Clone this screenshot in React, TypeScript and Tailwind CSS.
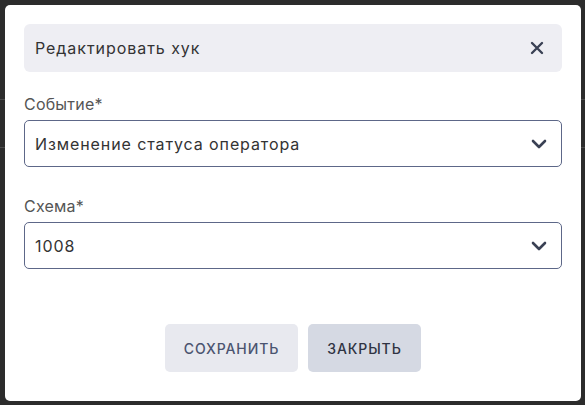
import React from "react";

const font = { fontFamily: "Inter, 'Noto Sans', sans-serif" };

function Chevron() {
  return (
    <svg width="16" height="10" viewBox="0 0 16 10" fill="none">
      <path d="M2 2 L8 8 L14 2" stroke="#3a4154" strokeWidth="2.6" strokeLinecap="round" strokeLinejoin="round" />
    </svg>
  );
}

function Select({ value }: { value: string }) {
  return (
    <div className="h-[47px] w-full rounded-[5px] border border-[#5d6788] flex items-center justify-between pl-[10px] pr-[14px]">
      <span className="text-[16px] text-[#333333] tracking-[0.9px]">{value}</span>
      <Chevron />
    </div>
  );
}

export default function App() {
  return (
    <div className="relative w-[585px] h-[405px] bg-[#2c2c2c] overflow-hidden p-[5px]" style={font}>
      <div className="absolute left-0 right-0 top-[99px] h-px bg-[#4a4a4a]" />
      <div className="absolute left-0 right-0 top-[147px] h-px bg-[#4a4a4a]" />
      <div className="relative w-[576px] h-[396px] bg-white rounded-[5px] px-[19px] pt-[19px] pb-[29px] flex flex-col">
        <div className="h-[48px] rounded-[6px] bg-[#eeeef3] flex items-center justify-between pl-[11px] pr-[18px]">
          <span className="text-[16px] text-[#333333] tracking-[0.95px]">Редактировать хук</span>
          <svg width="14" height="14" viewBox="0 0 14 14" fill="none">
            <path d="M2 2 L12 12 M12 2 L2 12" stroke="#3a4154" strokeWidth="2.4" strokeLinecap="round" />
          </svg>
        </div>
        <div className="mt-[20px] mb-[4px] h-[24px] leading-[24px] text-[16px] text-[#555555] tracking-[0.2px]">Событие*</div>
        <Select value="Изменение статуса оператора" />
        <div className="mt-[27px] mb-[4px] h-[24px] leading-[24px] text-[16px] text-[#555555] tracking-[0.2px]">Схема*</div>
        <Select value="1008" />
        <div className="mt-auto flex justify-center gap-[10px]">
          <button className="w-[133px] h-[48px] rounded-[5px] bg-[#e8e9ef] text-[14px] font-medium uppercase text-[#4b5470] tracking-[0.9px]">
            Сохранить
          </button>
          <button className="w-[113px] h-[48px] rounded-[5px] bg-[#d5d9e3] text-[14px] font-medium uppercase text-[#2f3342] tracking-[0.9px]">
            Закрыть
          </button>
        </div>
      </div>
    </div>
  );
}
